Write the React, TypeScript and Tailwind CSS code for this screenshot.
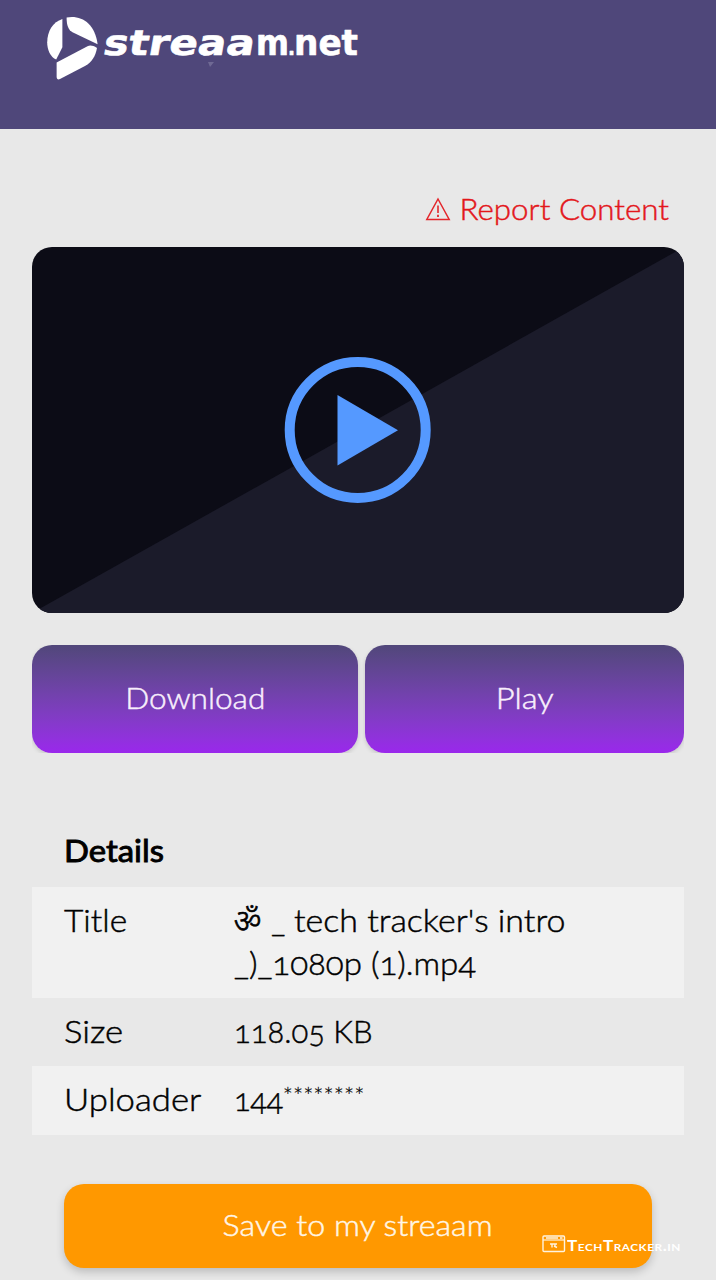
import type { ReactNode } from "react";

function Logo() {
  return (
    <svg width="330" height="72" viewBox="0 0 330 72" className="block" role="img" aria-label="streaam.net">
      <g fill="#fff" transform="translate(-10 -12)">
        <path d="M25.4 19V47.3L19.2 59.6C13.5 57 10.2 50 10.2 42.5C10.2 31 16 22 25.4 19Z" />
        <path d="M29.6 17.4C44 14.6 58 23 60.6 44.2L35.5 32.2C31.5 30 29.6 25.5 29.6 17.4Z" />
        <path d="M60 48C58.5 56 55 62 48 66L23 79C21 80 19.6 79 19.6 76.5V62.6L50.5 46.3C53 45 56 45.4 60 48Z" />
      </g>
      <g
        fill="#fff"
        stroke="#fff"
        strokeWidth="0.6"
        strokeLinejoin="round"
        className="font-[DejaVu_Sans,sans-serif] text-[35px] font-bold"
      >
        <text x="55" y="43" textLength="151" lengthAdjust="spacingAndGlyphs" transform="translate(7.6 0) skewX(-10)">
          streaa
        </text>
        <text x="209" y="43" textLength="33" lengthAdjust="spacingAndGlyphs">
          m
        </text>
        <text x="241" y="43" textLength="7" lengthAdjust="spacingAndGlyphs" className="text-[22px]">
          .
        </text>
        <text x="247" y="43" textLength="64" lengthAdjust="spacingAndGlyphs">
          net
        </text>
      </g>
      <path d="M161 50h6l-4 5z" fill="#8580a5" opacity=".6" />
    </svg>
  );
}

function WarningIcon() {
  return (
    <svg width="26" height="24" viewBox="0 0 26 24" fill="none" stroke="#e3262b" className="block">
      <path d="M13 2L24.2 22.4H1.8Z" strokeWidth="1.5" />
      <path d="M13 8.5V16" strokeWidth="1.6" />
      <path d="M13 17.8V20" strokeWidth="1.8" />
    </svg>
  );
}

function Row({ label, className, children }: { label: ReactNode; className: string; children: ReactNode }) {
  return (
    <div className={`flex pl-8 ${className}`}>
      <div className="w-[170px] shrink-0 pt-3">{label}</div>
      <div className="pt-3 whitespace-nowrap">{children}</div>
    </div>
  );
}

export default function App() {
  return (
    <div className="h-[1280px] w-[716px] overflow-hidden bg-[#e8e8e8] font-[Lato,sans-serif] font-light text-black [-webkit-text-stroke:0.45px_currentColor]">
      <header className="h-[129px] bg-[#4f477a] pt-3 pl-[47px] [-webkit-text-stroke:0]">
        <Logo />
      </header>

      <main className="px-8">
        <div className="flex h-[118px] items-start justify-end pt-[58px] pr-[15px] text-[#e3161b]">
          <div className="flex items-center">
            <WarningIcon />
            <span className="ml-[24px] inline-block origin-right scale-x-[1.08] text-[29px] leading-[44px]">
              Report Content
            </span>
          </div>
        </div>

        <div className="h-[366px] overflow-hidden rounded-[20px] bg-[#0c0c16]">
          <svg width="652" height="366" viewBox="0 0 652 366" className="block">
            <path d="M0 366L652 0V366Z" fill="#1b1b2a" />
            <circle cx="325.7" cy="183" r="68" fill="none" stroke="#5599ff" strokeWidth="10" />
            <path d="M305.5 148L366 183.3L305.5 218.5Z" fill="#5599ff" />
          </svg>
        </div>

        <div className="mt-8 flex h-[108px] gap-[7px] overflow-hidden text-[29px] text-[#f8effc]">
          <button className="w-[326px] rounded-[20px] bg-gradient-to-b from-[#51477a] to-[#9a27ec] pb-0.5 shadow-[0_2px_4px_#00000026]">
            <span className="inline-block scale-x-[1.09]">Download</span>
          </button>
          <button className="flex-1 rounded-[20px] bg-gradient-to-b from-[#51477a] to-[#9a27ec] pb-0.5 shadow-[0_2px_4px_#00000026]">
            <span className="inline-block scale-x-[1.13]">Play</span>
          </button>
        </div>

        <section className="mt-[63px] text-[31px] leading-[43px]">
          <h2 className="h-[71px] pt-[13px] pl-8 font-normal [-webkit-text-stroke:0.9px_currentColor]">
            <span className="inline-block origin-left scale-x-[1.06]">Details</span>
          </h2>
          <div className="[font-variant-numeric:oldstyle-nums]">
            <Row
              className="h-[111px] bg-[#f1f1f1]"
              label={<span className="inline-block origin-left scale-x-[1.08]">Title</span>}
            >
              <div className="h-[43px]">
                <span className="font-[Noto_Sans_Devanagari,Noto_Sans,sans-serif] text-[32px] leading-none [-webkit-text-stroke:0.7px_currentColor]">ॐ</span>
                <span className="ml-[10px]">_</span>
                <span className="ml-[9px] inline-block origin-left scale-x-[1.095]">tech tracker&apos;s intro</span>
              </div>
              <div className="origin-left scale-x-[1.066]">_)_1080p (1).mp4</div>
            </Row>
            <Row className="h-[68px]" label={<span className="inline-block origin-left scale-x-[1.12]">Size</span>}>
              118.05 KB
            </Row>
            <Row
              className="h-[69px] bg-[#f1f1f1]"
              label={<span className="inline-block origin-left scale-x-[1.12]">Uploader</span>}
            >
              <span className="tracking-[-0.5px]">144</span>
              <span className="relative -top-[6px] text-[24px] leading-none [-webkit-text-stroke:0.2px_currentColor]">********</span>
            </Row>
          </div>
        </section>

        <div className="relative mx-8 mt-[49px]">
          <button className="h-[84px] w-full rounded-[20px] bg-[#ff9800] pb-0.5 text-[29px] text-[#fff6e6] shadow-[0_4px_8px_#00000030]">
            <span className="inline-block scale-x-[1.11]">Save to my streaam</span>
          </button>
          <div className="absolute top-[51px] left-[478px] flex items-center text-white [-webkit-text-stroke:0]">
            <svg width="24" height="18" viewBox="0 0 24 18" fill="none" stroke="#fff3df" className="block">
              <rect x="1" y="1" width="21.5" height="15.5" rx="1" strokeWidth="1.4" />
              <path d="M1 5H22.5" strokeWidth="1.2" />
              <path d="M4 3H16M18 3H20.5" strokeWidth="1.3" />
              <path d="M8 9H15M10 9V12.5M12 11L15 12.5M13 9V12" strokeWidth="1.4" />
            </svg>
            <span className="relative top-[1.5px] ml-[1px] origin-left scale-x-[1.18] text-[14.5px] leading-[18px] font-bold tracking-[0.45px] whitespace-nowrap [font-variant-caps:small-caps]">
              TechTracker.in
            </span>
          </div>
        </div>
      </main>
    </div>
  );
}
